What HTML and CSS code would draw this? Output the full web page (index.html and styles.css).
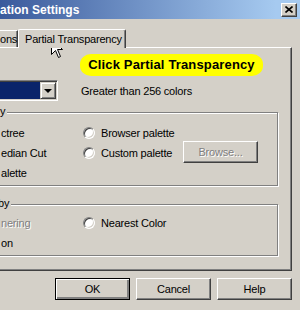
FILE: index.html
```html
<!DOCTYPE html>
<html lang="en">
<head>
  <meta charset="UTF-8" />
  <title>Optimization Settings</title>
  <link rel="stylesheet" href="styles.css">
</head>
<body>

  <!-- Title bar -->
  <div class="titlebar">
    <span class="title">ation Settings</span>
    <span class="close">
      <svg width="8" height="7" viewBox="0 0 8 7"><path d="M0.5 0.5 L7.5 6.5 M7.5 0.5 L0.5 6.5" stroke="#000" stroke-width="1.6" fill="none"/></svg>
    </span>
  </div>

  <div class="dialog">
    <div class="tabs">
      <div class="tab">ons</div>
      <div class="tab active">Partial Transparency</div>
    </div>

    <div class="panel">
      <div class="hint">Click Partial Transparency</div>

      <div class="combo-row">
        <div class="combo">
          <div class="combo-field"></div>
          <div class="combo-btn"><span class="arrow"></span></div>
        </div>
        <span class="combo-note">Greater than 256 colors</span>
      </div>

      <!-- Palette group -->
      <div class="group group-palette">
        <div class="group-title">y</div>
        <div class="group-grid">
          <span>ctree</span>
          <label class="radio"><span class="dot"></span>Browser palette</label>
          <span></span>
          <span>edian Cut</span>
          <label class="radio"><span class="dot"></span>Custom palette</label>
          <button class="btn browse" disabled>Browse...</button>
          <span>alette</span>
        </div>
      </div>

      <!-- Reduction group -->
      <div class="group group-reduce">
        <div class="group-title by">by</div>
        <div class="group-grid">
          <span class="disabled">nering</span>
          <label class="radio"><span class="dot"></span>Nearest Color</label>
          <span></span>
          <span>on</span>
        </div>
      </div>
    </div>

    <div class="actions">
      <button class="btn default">OK</button>
      <button class="btn">Cancel</button>
      <button class="btn">Help</button>
    </div>
  </div>

  <svg class="cursor" width="13" height="21" viewBox="0 0 13 21">
    <path d="M0.5 0.5 L0.5 16.5 L4.5 12.5 L7.5 19.5 L9.5 18.5 L6.5 11.5 L11.5 11.5 Z" fill="#fff" stroke="#000" stroke-width="1"/>
  </svg>

</body>
</html>
```

FILE: styles.css
```css
* { box-sizing: border-box; }
body {
  margin: 0;
  background-color: #d4d0c8;
  color: #000;
  font-family: 'Liberation Sans', Arial, sans-serif;
  font-size: 11px;
  letter-spacing: -0.2px;
  overflow: hidden;
}

/* Title bar */
.titlebar {
  height: 19px;
  display: flex;
  align-items: center;
  justify-content: space-between;
  padding-right: 3px;
  background: linear-gradient(to right, #3a5a9c, #a6caf0 92%);
}

.titlebar .title {
  color: #fff;
  font-weight: bold;
  font-size: 12px;
  letter-spacing: 0;
}

.close {
  width: 16px;
  height: 14px;
  display: flex;
  align-items: center;
  justify-content: center;
  background: #d4d0c8;
  border: 1px solid;
  border-color: #fff #404040 #404040 #fff;
  box-shadow: inset -1px -1px #808080;
}

/* Tabs */
.dialog { padding-top: 10px; }

.tabs {
  display: flex;
  align-items: flex-end;
  height: 18px;
}

.tab {
  width: 18px;
  height: 17px;
  line-height: 16px;
  padding-right: 5px;
  text-align: right;
  border-top: 1px solid #fff;
  border-right: 1px solid #404040;
  box-shadow: inset -1px 0 #808080;
}

.tab.active {
  position: relative;
  z-index: 1;
  width: 108px;
  height: 19px;
  margin-bottom: -1px;
  padding: 0 0 0 6px;
  text-align: left;
  line-height: 18px;
  background: #d4d0c8;
  border-left: 1px solid #fff;
  border-top-left-radius: 2px;
  border-top-right-radius: 2px;
}

/* Tab page */
.panel {
  margin-left: -3px;
  width: 295px;
  height: 224px;
  padding: 6px 13px 0 2px;
  border: 1px solid;
  border-color: #fff #404040 #404040 #fff;
  box-shadow: inset -1px -1px #808080;
}

.hint {
  margin-left: 80px;
  width: 183px;
  height: 22px;
  line-height: 22px;
  border-radius: 11px / 10px;
  background: #ffff00;
  text-align: center;
  font-weight: bold;
  font-size: 13px;
  letter-spacing: 0.15px;
}

.combo-row {
  display: flex;
  align-items: center;
  margin-top: 4px;
}

.combo {
  display: flex;
  margin-left: -40px;
  width: 98px;
  height: 21px;
  padding: 1px;
  border: 1px solid;
  border-color: #808080 #fff #fff #808080;
  box-shadow: inset 1px 1px #404040, inset -1px -1px #d4d0c8;
}

.combo-field {
  flex: 1;
  background: #0a246a;
}

.combo-btn {
  width: 16px;
  display: flex;
  align-items: center;
  justify-content: center;
  background: #d4d0c8;
  border: 1px solid;
  border-color: #d4d0c8 #404040 #404040 #d4d0c8;
  box-shadow: inset 1px 1px #fff, inset -1px -1px #808080;
}

.arrow {
  width: 0;
  height: 0;
  border-left: 4px solid transparent;
  border-right: 4px solid transparent;
  border-top: 4px solid #000;
}

.combo-note { margin-left: 23px; }

/* Group boxes */
.group {
  margin-left: -10px;
  padding-left: 10px;
  border: 1px solid #808080;
  box-shadow: inset 1px 1px #fff, 1px 1px #fff;
}

.group-palette { margin-top: 11px; height: 74px; }
.group-reduce { margin-top: 18px; height: 52px; }

.group-title {
  display: table;
  margin: -8px 0 0 -1px;
  padding-right: 2px;
  line-height: 13px;
  background: #d4d0c8;
}

.group-title.by { margin-left: -3px; }

.group-grid {
  display: grid;
  grid-template-columns: 82px 100px 75px;
  grid-auto-rows: 20px;
  align-items: center;
  margin-top: 5px;
}

.group-reduce .group-grid { margin-top: 3px; }

.radio {
  display: flex;
  align-items: center;
  gap: 6px;
}

.dot {
  width: 12px;
  height: 12px;
  border-radius: 50%;
  background: #fff;
  border: 1px solid;
  border-color: #808080 #fff #fff #808080;
  box-shadow: inset 1px 1px #404040, inset -1px -1px #d4d0c8;
}

.disabled {
  color: #808080;
  text-shadow: 1px 1px #fff;
}

/* Buttons */
.btn {
  width: 75px;
  height: 22px;
  padding: 0;
  font-family: inherit;
  font-size: 11px;
  letter-spacing: -0.2px;
  color: #000;
  background: #d4d0c8;
  border: 1px solid;
  border-color: #fff #404040 #404040 #fff;
  box-shadow: inset -1px -1px #808080;
}

.btn.default {
  border: 1px solid #000;
  box-shadow: inset 1px 1px #fff, inset -2px -2px #808080, inset -1px -1px #404040;
}

.btn.browse {
  margin-top: -3px;
  color: #808080;
  text-shadow: 1px 1px #fff;
}

.actions {
  display: flex;
  justify-content: flex-end;
  gap: 6px;
  margin-top: 7px;
  padding-right: 8px;
}

/* Mouse pointer over the tab */
.cursor {
  position: absolute;
  left: 51px;
  top: 38px;
}
```
